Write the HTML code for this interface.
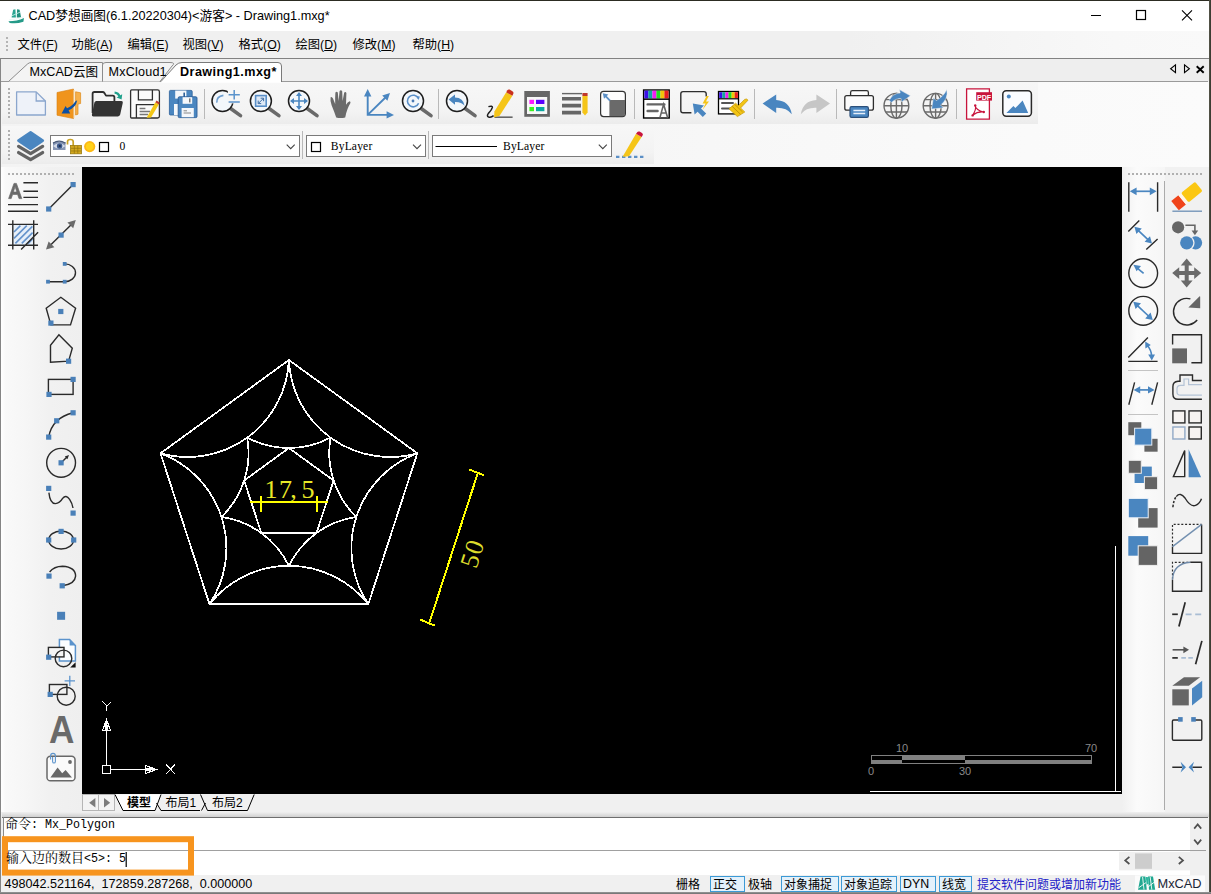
<!DOCTYPE html><html lang="zh-CN"><head><meta charset="utf-8"><title>CAD梦想画图</title><style>
*{margin:0;padding:0;box-sizing:border-box}
html,body{width:1211px;height:894px;overflow:hidden;background:#f0f0f0}
body{position:relative;font-family:"Liberation Sans","Noto Sans CJK SC",sans-serif;font-size:12px;color:#000}
.a{position:absolute}
.t{position:absolute;white-space:nowrap;line-height:1}
.ui{font-family:"Liberation Sans","Noto Sans CJK SC",sans-serif}
.songc{font-family:"Liberation Serif","Noto Serif CJK SC",serif}
.mn{display:inline-block;font-family:"Liberation Mono",monospace;font-weight:400;font-size:13.33px;transform:scaleX(.875);transform-origin:0 50%}
.song{font-family:"Liberation Serif","Noto Serif CJK SC",serif}
svg{position:absolute;left:0;top:0;overflow:visible}
u{text-decoration:underline;text-underline-offset:1px}
</style></head><body>
<div class="a" style="left:0px;top:0px;width:1211px;height:31px;background:#fff"></div>
<div class="t ui" style="left:28.5px;top:10px;font-size:12.7px">CAD梦想画图(6.1.20220304)&lt;游客&gt; - Drawing1.mxg*</div>
<div class="a" style="left:0px;top:31px;width:1211px;height:27px;background:linear-gradient(90deg,#f0f0f0 0,#f0f0f0 70%,#f8f8f8 92%,#f9f9f9 100%)"></div>
<div class="a" style="left:0px;top:58px;width:1211px;height:1px;background:#828282"></div>
<div class="t ui" style="left:17.5px;top:39px;font-size:12.3px">文件(<u>F</u>)</div>
<div class="t ui" style="left:71.5px;top:39px;font-size:12.3px">功能(<u>A</u>)</div>
<div class="t ui" style="left:127.5px;top:39px;font-size:12.3px">编辑(<u>E</u>)</div>
<div class="t ui" style="left:182.5px;top:39px;font-size:12.3px">视图(<u>V</u>)</div>
<div class="t ui" style="left:238.5px;top:39px;font-size:12.3px">格式(<u>O</u>)</div>
<div class="t ui" style="left:295.5px;top:39px;font-size:12.3px">绘图(<u>D</u>)</div>
<div class="t ui" style="left:352.5px;top:39px;font-size:12.3px">修改(<u>M</u>)</div>
<div class="t ui" style="left:412.5px;top:39px;font-size:12.3px">帮助(<u>H</u>)</div>
<div class="a" style="left:0px;top:59px;width:1211px;height:22px;background:#eeeeee"></div>
<div class="a" style="left:0px;top:81px;width:1208px;height:1px;background:#9a9a9a"></div>
<div class="a" style="left:1px;top:82px;width:1208px;height:85px;background:linear-gradient(90deg,#f3f3f3 0,#f6f6f6 50%,#fafafa 85%,#fbfbfb 100%)"></div>
<div class="a" style="left:2px;top:82px;width:1036px;height:42px;background:linear-gradient(180deg,#f7f7f7,#f3f3f3 70%,#ececec)"></div>
<div class="a" style="left:2px;top:126px;width:652px;height:38px;background:linear-gradient(180deg,#f7f7f7,#f3f3f3 70%,#ececec)"></div>
<div class="a" style="left:1px;top:167px;width:81px;height:645px;background:linear-gradient(90deg,#ffffff 0,#f9f9f9 6%,#f6f6f6 30%,#f1f1f1 60%,#efefef 100%)"></div>
<div class="a" style="left:1122px;top:167px;width:43px;height:645px;background:linear-gradient(90deg,#f0f0f0 0,#fbfbfb 35%,#f6f6f6 100%)"></div>
<div class="a" style="left:1165px;top:167px;width:44px;height:645px;background:#f1f1f1"></div>
<div class="a" style="left:82.3px;top:167px;width:1039.4px;height:626.6px;background:#000"></div>
<div class="a" style="left:82px;top:794px;width:1040px;height:17px;background:#f0f0f0"></div>
<div class="a" style="left:2px;top:812px;width:1207px;height:5px;background:linear-gradient(180deg,#f0f0f0,#d0d0d0)"></div>
<div class="a" style="left:2px;top:817px;width:1206px;height:1px;background:#6e6e6e"></div>
<div class="a" style="left:3px;top:818px;width:1204px;height:32px;background:#fff"></div>
<div class="a" style="left:3px;top:817px;width:1px;height:59px;background:#8a8a8a"></div>
<div class="a" style="left:3px;top:850px;width:1203px;height:1px;background:#a0a0a0"></div>
<div class="a" style="left:4px;top:851px;width:1203px;height:24px;background:#fff"></div>
<div class="a" style="left:0px;top:875px;width:1211px;height:19px;background:#f0f0f0"></div>
<div class="a" style="left:0px;top:0px;width:1211px;height:1px;background:#2c2c22"></div>
<div class="a" style="left:1209px;top:0px;width:2px;height:894px;background:linear-gradient(90deg,#5a5a4e,#33332a)"></div>
<div class="a" style="left:0px;top:58px;width:1px;height:836px;background:#858585"></div>
<div class="a" style="left:0px;top:892px;width:1211px;height:2px;background:linear-gradient(180deg,#9a9a9a,#6e6e6e)"></div>
<svg width="1211" height="894" viewBox="0 0 1211 894"><path d="M1091 15.5h10" stroke="#000" stroke-width="1" fill="none"/><rect x="1136.5" y="10.5" width="9" height="9" stroke="#000" stroke-width="1.2" fill="none"/><path d="M1182 10.3l10 10M1192 10.3l-10 10" stroke="#000" stroke-width="1.1" fill="none"/><g><path d="M8.4 21.2 Q17 21.2 24 18 L23.4 21.8 Q16 24.2 9.8 22.9Z" fill="#259a88"/><path d="M11.6 17.4 L13.1 9.7 L15.4 9.3 L15.9 17.4Z" fill="#2aa592"/><path d="M16.8 17.4 L17.1 9.3 L19.6 9.7 L21.1 17.4Z" fill="#1f8f7e"/><path d="M11.4 16 L20.4 12" stroke="#bfeee4" stroke-width=".9"/><path d="M9.4 19.6 Q17 19.6 23.6 16.9" stroke="#e9f8f5" stroke-width=".9" fill="none"/></g><rect x="6" y="37" width="2" height="2" fill="#b4b4b4"/><rect x="6" y="41" width="2" height="2" fill="#b4b4b4"/><rect x="6" y="45" width="2" height="2" fill="#b4b4b4"/><rect x="6" y="49" width="2" height="2" fill="#b4b4b4"/><path d="M8.5 81.5 L27.5 64 Q29 62.5 31.5 62.5 H102.5 V81.5" fill="#f4f4f4" stroke="#8c8c8c" stroke-width="1"/><path d="M102.5 81.5 V65 Q102.5 62.5 106 62.5 H170 Q176 62.5 172 66 L160 81.5" fill="#f4f4f4" stroke="#8c8c8c" stroke-width="1"/><path d="M160.5 82 L176 65 Q178.5 62.5 182 62.5 H278 Q281.5 62.5 281.5 66 V82" fill="#ffffff" stroke="#7a7a7a" stroke-width="1"/><path d="M161.5 82 H281" stroke="#fff" stroke-width="1.6"/><path d="M1175.5 64.8 V72.6 L1170.6 68.7Z" fill="none" stroke="#000" stroke-width="1.1"/><path d="M1184.5 64.8 V72.6 L1189.4 68.7Z" fill="none" stroke="#000" stroke-width="1.1"/><path d="M1196.7 66.3 L1203.7 72.8 M1203.7 66.3 L1196.7 72.8" stroke="#000" stroke-width="1.9" fill="none"/><rect x="8" y="88" width="2" height="2" fill="#b0b0b0"/><rect x="8" y="130" width="2" height="2" fill="#b0b0b0"/><rect x="8" y="92" width="2" height="2" fill="#b0b0b0"/><rect x="8" y="134" width="2" height="2" fill="#b0b0b0"/><rect x="8" y="96" width="2" height="2" fill="#b0b0b0"/><rect x="8" y="138" width="2" height="2" fill="#b0b0b0"/><rect x="8" y="100" width="2" height="2" fill="#b0b0b0"/><rect x="8" y="142" width="2" height="2" fill="#b0b0b0"/><rect x="8" y="104" width="2" height="2" fill="#b0b0b0"/><rect x="8" y="146" width="2" height="2" fill="#b0b0b0"/><rect x="8" y="108" width="2" height="2" fill="#b0b0b0"/><rect x="8" y="150" width="2" height="2" fill="#b0b0b0"/><rect x="8" y="112" width="2" height="2" fill="#b0b0b0"/><rect x="8" y="154" width="2" height="2" fill="#b0b0b0"/><rect x="8" y="116" width="2" height="2" fill="#b0b0b0"/><rect x="8" y="158" width="2" height="2" fill="#b0b0b0"/><rect x="8" y="173" width="2" height="2" fill="#b0b0b0"/><rect x="12" y="173" width="2" height="2" fill="#b0b0b0"/><rect x="16" y="173" width="2" height="2" fill="#b0b0b0"/><rect x="20" y="173" width="2" height="2" fill="#b0b0b0"/><rect x="24" y="173" width="2" height="2" fill="#b0b0b0"/><rect x="28" y="173" width="2" height="2" fill="#b0b0b0"/><rect x="32" y="173" width="2" height="2" fill="#b0b0b0"/><rect x="36" y="173" width="2" height="2" fill="#b0b0b0"/><rect x="40" y="173" width="2" height="2" fill="#b0b0b0"/><rect x="44" y="173" width="2" height="2" fill="#b0b0b0"/><rect x="48" y="173" width="2" height="2" fill="#b0b0b0"/><rect x="52" y="173" width="2" height="2" fill="#b0b0b0"/><rect x="56" y="173" width="2" height="2" fill="#b0b0b0"/><rect x="60" y="173" width="2" height="2" fill="#b0b0b0"/><rect x="64" y="173" width="2" height="2" fill="#b0b0b0"/><rect x="68" y="173" width="2" height="2" fill="#b0b0b0"/><rect x="72" y="173" width="2" height="2" fill="#b0b0b0"/><rect x="1128" y="173" width="2" height="2" fill="#b0b0b0"/><rect x="1132" y="173" width="2" height="2" fill="#b0b0b0"/><rect x="1136" y="173" width="2" height="2" fill="#b0b0b0"/><rect x="1140" y="173" width="2" height="2" fill="#b0b0b0"/><rect x="1144" y="173" width="2" height="2" fill="#b0b0b0"/><rect x="1148" y="173" width="2" height="2" fill="#b0b0b0"/><rect x="1152" y="173" width="2" height="2" fill="#b0b0b0"/><rect x="1156" y="173" width="2" height="2" fill="#b0b0b0"/><rect x="1160" y="173" width="2" height="2" fill="#b0b0b0"/><rect x="1164" y="173" width="2" height="2" fill="#b0b0b0"/><rect x="1168" y="173" width="2" height="2" fill="#b0b0b0"/><rect x="1172" y="173" width="2" height="2" fill="#b0b0b0"/><rect x="1176" y="173" width="2" height="2" fill="#b0b0b0"/><rect x="1180" y="173" width="2" height="2" fill="#b0b0b0"/><rect x="1184" y="173" width="2" height="2" fill="#b0b0b0"/><rect x="1188" y="173" width="2" height="2" fill="#b0b0b0"/><rect x="1192" y="173" width="2" height="2" fill="#b0b0b0"/><rect x="1196" y="173" width="2" height="2" fill="#b0b0b0"/><rect x="1200" y="173" width="2" height="2" fill="#b0b0b0"/><path d="M204.5 89 V119" stroke="#b9b9b9" stroke-width="1"/><path d="M438.5 89 V119" stroke="#b9b9b9" stroke-width="1"/><path d="M634.5 89 V119" stroke="#b9b9b9" stroke-width="1"/><path d="M754.5 89 V119" stroke="#b9b9b9" stroke-width="1"/><path d="M836.5 89 V119" stroke="#b9b9b9" stroke-width="1"/><path d="M956.5 89 V119" stroke="#b9b9b9" stroke-width="1"/><path d="M302.5 131 V159" stroke="#b9b9b9" stroke-width="1"/><path d="M428.5 131 V159" stroke="#b9b9b9" stroke-width="1"/><path d="M1164.5 181 V810" stroke="#ababab" stroke-width="1"/><path d="M1128 370.5 H1158 M1128 414.5 H1158" stroke="#c4c4c4" stroke-width="1"/><rect x="50.5" y="135.5" width="249" height="21" fill="#fff" stroke="#7a7a7a" stroke-width="1"/><rect x="306.5" y="135.5" width="119" height="21" fill="#fff" stroke="#7a7a7a" stroke-width="1"/><rect x="432.5" y="135.5" width="179" height="21" fill="#fff" stroke="#7a7a7a" stroke-width="1"/><path d="M286.7 144.6 L290.7 148.6 L294.7 144.6" fill="none" stroke="#444" stroke-width="1.1"/><path d="M413 144.6 L417 148.6 L421 144.6" fill="none" stroke="#444" stroke-width="1.1"/><path d="M598.8 144.6 L602.8 148.6 L606.8 144.6" fill="none" stroke="#444" stroke-width="1.1"/><rect x="99.5" y="142.5" width="9" height="9" fill="#fff" stroke="#000" stroke-width="1.2"/><rect x="311.5" y="142.5" width="9" height="9" fill="#fff" stroke="#000" stroke-width="1.2"/><path d="M435.5 146.5 H497" stroke="#000" stroke-width="1"/><g><rect x="53" y="142" width="12.5" height="8" fill="#8796b4"/><path d="M53 146 Q59 140.5 65.5 146 Q59 151 53 146Z" fill="#d5dbe8"/><circle cx="59.6" cy="146" r="2.7" fill="#3d5a8c"/><circle cx="59.8" cy="146" r="1.1" fill="#1c2c4a"/><path d="M53 143.2 Q59 139 65.5 143.2" stroke="#4a5a78" stroke-width="1.2" fill="none"/></g><g><path d="M67.5 144.5 V141.8 Q67.5 139.5 70.3 139.5 Q73.2 139.5 73.2 141.8 V146" fill="none" stroke="#c9a227" stroke-width="1.7"/><rect x="70.5" y="145.5" width="11" height="8.3" fill="#d4a81e" stroke="#9a7a10" stroke-width=".8"/><path d="M71 148.3H81M71 151H81M74.3 145.8V153.5M77.8 145.8V153.5" stroke="#8a6c0c" stroke-width=".6"/></g><g><circle cx="89.7" cy="146.6" r="5.6" fill="#fdb813"/><circle cx="89.7" cy="146.6" r="3.8" fill="#ffd21a"/></g><rect x="82.5" y="794.5" width="16" height="16" fill="#f3f3f3" stroke="#b5b5b5" stroke-width="1"/><rect x="98.5" y="794.5" width="16" height="16" fill="#f3f3f3" stroke="#b5b5b5" stroke-width="1"/><path d="M95.4 798 V807.6 L89.2 802.8Z" fill="#7b7b7b"/><path d="M104 798 V807.6 L110.2 802.8Z" fill="#7b7b7b"/><path d="M115 794.5 L123 810.5 H155 L161 794.5Z" fill="#fff"/><path d="M115 794.5 L123 810.5 H155 L161 794.5" fill="none" stroke="#000" stroke-width="1"/><path d="M156.5 803 L161 810.5 H200" fill="none" stroke="#000" stroke-width="1"/><path d="M200.5 794.5 L207.5 810.5 H247.5 L254.2 794.5" fill="none" stroke="#000" stroke-width="1"/><path d="M205.5 803 L201.5 810.5" fill="none" stroke="#000" stroke-width="1"/><rect x="1190" y="818" width="17" height="32" fill="#f0f0f0"/><path d="M1194.2 828.6 L1197.7 824.4 L1201.2 828.6" fill="none" stroke="#505050" stroke-width="1.7"/><path d="M1194.2 839.6 L1197.7 843.8 L1201.2 839.6" fill="none" stroke="#505050" stroke-width="1.7"/><rect x="1119" y="852" width="71" height="18.4" fill="#f0f0f0"/><rect x="1190" y="851" width="17" height="24" fill="#f0f0f0"/><rect x="1135" y="853.4" width="17" height="15.4" fill="#cdcdcd"/><path d="M1129.4 856.8 L1125.2 860.4 L1129.4 864" fill="none" stroke="#505050" stroke-width="1.7"/><path d="M1178.8 856.8 L1183 860.4 L1178.8 864" fill="none" stroke="#505050" stroke-width="1.7"/><rect x="1135" y="875.5" width="70" height="16.5" fill="#fbfbfb"/><rect x="5" y="839.2" width="186" height="33.4" fill="none" stroke="#f7941e" stroke-width="6"/><rect x="125.6" y="852" width="1.2" height="15" fill="#000"/><rect x="710.5" y="876.5" width="34" height="15" fill="#e3f1fb" stroke="#3c9ad6" stroke-width="1"/><rect x="781.5" y="876.5" width="57" height="15" fill="#e3f1fb" stroke="#3c9ad6" stroke-width="1"/><rect x="841.5" y="876.5" width="55" height="15" fill="#e3f1fb" stroke="#3c9ad6" stroke-width="1"/><rect x="900.5" y="876.5" width="35" height="15" fill="#e3f1fb" stroke="#3c9ad6" stroke-width="1"/><rect x="939.5" y="876.5" width="32" height="15" fill="#e3f1fb" stroke="#3c9ad6" stroke-width="1"/><g fill="#1fa890"><path d="M1140.6 876.4 L1145.4 876.4 L1146.8 889.8 L1138 889.8Z"/><path d="M1148 876.4 L1153 876.4 L1155.2 889.8 L1149 889.8Z"/><path d="M1145.8 877 L1147.8 877 L1148.6 884 L1146.6 884.6Z" fill="#2bb8a0"/></g><path d="M1138.4 888 L1146 882.6 M1147.4 887.4 L1154 882.4 M1142.6 877 L1144 889.6 M1150.2 877 L1151.8 889.6" stroke="#fbfbfb" stroke-width=".9" fill="none"/></svg>
<div class="t ui" style="left:29.5px;top:66px;font-size:12.6px">MxCAD云图</div>
<div class="t ui" style="left:108.5px;top:66px;font-size:12.6px;letter-spacing:.2px">MxCloud1</div>
<div class="t ui" style="left:180px;top:66px;font-size:12.6px;font-weight:bold;letter-spacing:.45px">Drawing1.mxg*</div>
<div class="t song" style="left:119.5px;top:141.3px;font-size:11.6px">0</div>
<div class="t song" style="left:330.8px;top:141px;font-size:11.6px;letter-spacing:.15px">ByLayer</div>
<div class="t song" style="left:503px;top:141px;font-size:11.6px;letter-spacing:.15px">ByLayer</div>
<div class="t ui" style="left:127px;top:797px;font-size:12px;font-weight:bold">模型</div>
<div class="t ui" style="left:165.5px;top:797px;font-size:12px">布局1</div>
<div class="t ui" style="left:212px;top:797px;font-size:12px">布局2</div>
<div class="t songc" style="left:5px;top:817px;font-size:13px;font-weight:400">命令<span class="mn">: Mx_Polygon</span></div>
<div class="t songc" style="left:6px;top:851px;font-size:13px;font-weight:400">输入边的数目<span class="mn">&lt;5&gt;: 5</span></div>
<div class="t ui" style="left:4.5px;top:877.5px;font-size:12.6px">498042.521164,&nbsp; 172859.287268,&nbsp; 0.000000</div>
<div class="t ui" style="left:676px;top:879px;font-size:12px">栅格</div>
<div class="t ui" style="left:713px;top:879px;font-size:12px">正交</div>
<div class="t ui" style="left:748px;top:879px;font-size:12px">极轴</div>
<div class="t ui" style="left:784px;top:879px;font-size:12px">对象捕捉</div>
<div class="t ui" style="left:844px;top:879px;font-size:12px">对象追踪</div>
<div class="t ui" style="left:903px;top:878px;font-size:12.4px">DYN</div>
<div class="t ui" style="left:942px;top:879px;font-size:12px">线宽</div>
<div class="t ui" style="left:977px;top:879px;font-size:12px;color:#2222c8">提交软件问题或增加新功能</div>
<div class="t ui" style="left:1157.5px;top:878px;font-size:12.8px;color:#1a2636">MxCAD</div>
<svg width="1211" height="894" viewBox="0 0 1211 894"><path d="M16.6 91.9 H36.2 L45.4 101 V115 H16.6Z" fill="#eef2f9" stroke="#8ba6cd" stroke-width="1.3" stroke-linejoin="round"/><path d="M36.2 91.9 V101 H45.4" fill="none" stroke="#8ba6cd" stroke-width="1.3"/><path d="M57 92.5 L73.5 89 V118.6 L57 115.2Z" fill="#f0941c"/><path d="M57 92.5 L73.5 89 V118.6 L57 115.2Z" fill="none" stroke="#d87f10" stroke-width=".6"/><path d="M75.6 91.8 L80.6 92.8 V103.5 L78 104 V114.2 L75.6 115Z" fill="#f6b04a" stroke="#e08a18" stroke-width=".7"/><path d="M74.2 90 V118" stroke="#fbe3bd" stroke-width="1.2"/><path d="M77.2 100.3 Q76 107.5 68.6 110.2 L70.2 113.4 L61.6 113.6 L65.6 106 L67 108.3 Q73.4 105.2 75.2 101.5Z" fill="#0b4fa3"/><path d="M92.6 113 V93.8 Q92.6 92 94.4 92 H102.6 Q103.8 92 104.4 93 L106 95.6 H112.8 Q114.4 95.6 114.4 97.2 V101" fill="none" stroke="#2e2e2e" stroke-width="1.8" stroke-linejoin="round"/><path d="M96.4 101 H121.4 Q123.2 101 122.8 102.8 L120.2 114.6 Q119.8 116.4 118 116.4 H93.4 Q91.4 116.4 91.9 114.4 L94.4 102.6 Q94.8 101 96.4 101Z" fill="#333333"/><path d="M114.6 92.6 Q118.4 92.8 119.6 96.6" fill="none" stroke="#1fa18c" stroke-width="2.2"/><path d="M116.6 97.4 L121.6 99.6 L122.2 94.2Z" fill="#1fa18c"/><path d="M131.6 89.9 H157.6 Q159.4 89.9 159.4 91.7 V116.2 Q159.4 118 157.6 118 H131.6 Q130.6 118 130.6 117 V90.9 Q130.6 89.9 131.6 89.9Z" fill="#fafafa" stroke="#2e2e2e" stroke-width="1.3"/><path d="M138.4 90 V99.8 H152.4 V90" fill="none" stroke="#2e2e2e" stroke-width="1.3"/><path d="M136.4 118 V104.6 H155" fill="none" stroke="#2e2e2e" stroke-width="1.3"/><path d="M139.6 108.6 H145.4 M139.6 111.6 H150 M139.6 114.4 H148" stroke="#777" stroke-width="1.5"/><path d="M155.4 102.2 L158.8 104.6 L151 117.4 L146.6 117.8Z" fill="#f3c716"/><path d="M155.4 102.2 L158.8 104.6 L159.8 102.8 L156.6 100.6Z" fill="#c0392b"/><path d="M170.4 90.4 H191 Q192.2 90.4 192.2 91.6 V115 H170.4 Q169.4 115 169.4 114 V91.4 Q169.4 90.4 170.4 90.4Z" fill="#4a86c0" stroke="#2c5f98" stroke-width=".8"/><rect x="175.2" y="90.6" width="11.2" height="8" fill="#f4f7fb"/><rect x="183.4" y="92.6" width="1.6" height="4.4" fill="#2c5f98"/><rect x="174" y="104" width="6" height="11" fill="#f4f7fb"/><path d="M179.4 96.8 H195.8 Q197 96.8 197 98 V116.4 Q197 117.6 195.8 117.6 H179.4 Q178.2 117.6 178.2 116.4 V98 Q178.2 96.8 179.4 96.8Z" fill="#4a86c0" stroke="#2c5f98" stroke-width=".9"/><rect x="182.6" y="97.2" width="9.6" height="6.6" fill="#f4f7fb"/><rect x="189" y="98.4" width="1.5" height="4" fill="#777"/><rect x="181.6" y="108" width="12.2" height="9.2" fill="#f4f7fb"/><path d="M183.6 110.8 H187 M183.6 113 H191" stroke="#888" stroke-width="1"/><path d="M230.3 108.2 L240.5 115.6" stroke="#6a6a6a" stroke-width="3.6" stroke-linecap="round"/><circle cx="222.5" cy="101" r="10.5" fill="#f3f7fb" stroke="#1e1e1e" stroke-width="1.5"/><path d="M216.8 102.6 Q216.4 96.4 223.4 95.4" fill="none" stroke="#6f9fd0" stroke-width="1.6"/><rect x="227.8" y="89.4" width="12.6" height="14" fill="#f6f6f6"/><path d="M228.6 94.8 H239.8 M234.2 90 V99.4 M228.6 102 H239.8" stroke="#5b93cc" stroke-width="1.5" fill="none"/><path d="M268.7 108.2 L278.9 115.6" stroke="#6a6a6a" stroke-width="3.6" stroke-linecap="round"/><circle cx="260.9" cy="101" r="10.5" fill="#f3f7fb" stroke="#1e1e1e" stroke-width="1.5"/><rect x="255.6" y="95.6" width="10.6" height="10.6" fill="#dfeaf6" stroke="#5a8fc8" stroke-width="1.6"/><path d="M258.4 103.4 L263.4 98.4 M260.6 98.2 H263.6 V101.2 M258.2 100.6 V103.6 H261.2" stroke="#3f6ea5" stroke-width="1" fill="none"/><path d="M306.8 108.2 L317 115.6" stroke="#6a6a6a" stroke-width="3.6" stroke-linecap="round"/><circle cx="299" cy="101" r="10.5" fill="#f3f7fb" stroke="#1e1e1e" stroke-width="1.5"/><path d="M291.6 101 H306.4 M299 93.6 V108.4" stroke="#4a86c0" stroke-width="1.6"/><path d="M299 92 L296 96 H302Z M299 110 L296 106 H302Z M290 101 L294 98 V104Z M308 101 L304 98 V104Z" fill="#4a86c0"/><path d="M336.2 117.4 Q334.4 112 331.6 105.2 Q330 100.6 330.6 97.2 Q332 96.4 333 98.6 L335.2 104 Q335 97 335.4 92.4 Q336.8 90.8 337.8 92.6 L338.6 101 L339.6 91 Q341 89.2 342.2 91.2 L342.6 101 L344.2 92.6 Q345.6 91.2 346.4 93 L346 104.8 Q347.6 102 349.6 101.2 Q351.2 101.4 350.2 103.6 Q347 108.6 345.2 117.4 Q340.6 118.8 336.2 117.4Z" fill="#6b6b6b"/><path d="M367.7 95 V114.9 H388 M367.7 114.9 L386 97" stroke="#4a86c0" stroke-width="1.9" fill="none"/><path d="M367.7 89 L364 96.4 H371.4Z M394 114.9 L386.6 111.2 V118.6Z M390 93 L382.2 95.6 L387.4 100.8Z" fill="#4a86c0"/><path d="M420.8 108.2 L431 115.6" stroke="#6a6a6a" stroke-width="3.6" stroke-linecap="round"/><circle cx="413" cy="101" r="10.5" fill="#f3f7fb" stroke="#1e1e1e" stroke-width="1.5"/><path d="M418.4 98.4 A5.8 5.8 0 1 0 418.6 103.2" fill="none" stroke="#5a8fc8" stroke-width="1.6"/><circle cx="413" cy="101" r="1.4" fill="#4a7ab4"/><path d="M416.2 96 L419.8 96.6 L418.6 100Z" fill="#5a8fc8"/><path d="M464.8 108.2 L475 115.6" stroke="#6a6a6a" stroke-width="3.6" stroke-linecap="round"/><circle cx="457" cy="101" r="10.5" fill="#f3f7fb" stroke="#1e1e1e" stroke-width="1.5"/><path d="M448.6 99.6 L455 94.6 V97.4 Q463.4 97.6 464.6 105.8 Q461.6 101.8 455 102 V104.8Z" fill="#4a86c0"/><path d="M488.4 106.6 Q492.6 105.4 492.4 107.4 Q491.8 110 488.4 113.4 Q486.4 116.2 488.6 117 Q491.2 117.8 493.6 115.6" fill="none" stroke="#1e1e1e" stroke-width="1.5"/><path d="M494.4 117.2 H512.6" stroke="#666" stroke-width="1.6"/><path d="M506.2 92.2 L512.4 95.8 L499.6 115.8 L494 117.6 L494.4 111.6Z" fill="#f5c518"/><path d="M506.2 92.2 L512.4 95.8 L513.4 93.6 Q513.8 92.2 512.4 91.2 L509.6 89.6 Q508.2 89 507.4 90.2Z" fill="#c8301e"/><rect x="524.3" y="91" width="25.6" height="25.8" fill="#666"/><rect x="527" y="97" width="20.2" height="17" fill="#f7f7f7"/><rect x="529.4" y="99.8" width="4.6" height="4.2" fill="#ff19ff"/><rect x="536" y="99.8" width="8.4" height="4.2" fill="#5a00ff"/><rect x="529.4" y="107" width="4.6" height="4.2" fill="#3df21e"/><rect x="536" y="107" width="8.4" height="4.2" fill="#0aa8a0"/><path d="M562 93.6 H582" stroke="#666" stroke-width="1.4"/><path d="M562 98.8 H581 M562 105.6 H581 M562 112.6 H581" stroke="#666" stroke-width="3.6"/><path d="M582.4 96 H587.6 V112.4 L585 115.4 L582.4 112.4Z" fill="#f5c518"/><rect x="582.4" y="93" width="5.2" height="3" fill="#c0392b"/><rect x="600.6" y="91.4" width="24.8" height="25.2" rx="3" fill="#fdfdfd" stroke="#333" stroke-width="1.2"/><path d="M609.4 100 H625 V114 Q625 116.2 622.8 116.2 H609.4Z" fill="#6a6a6a"/><path d="M610 100.6 L604.6 95.2" stroke="#5b8fc6" stroke-width="1.8"/><path d="M602.8 93.2 L608.4 94.4 L604 98.8Z" fill="#5b8fc6"/><rect x="643.6" y="90" width="25.6" height="28" fill="#fff" stroke="#000" stroke-width="1.4"/><rect x="644.4" y="90.6" width="4.1" height="8" fill="#3a10e8"/><rect x="648.4" y="90.6" width="4.1" height="8" fill="#12a7a0"/><rect x="652.4" y="90.6" width="4.1" height="8" fill="#f21cf2"/><rect x="656.4" y="90.6" width="4.1" height="8" fill="#22dd22"/><rect x="660.4" y="90.6" width="4.1" height="8" fill="#f2c40a"/><rect x="664.4" y="90.6" width="4.1" height="8" fill="#e81e1e"/><path d="M643.6 99.2 H669.2" stroke="#000" stroke-width="1.4"/><path d="M647.6 104.4 H664.4 M647.6 111 H657.6" stroke="#666" stroke-width="2.4" stroke-linecap="round"/><path d="M660 117.4 L663.6 104.4 L667.6 117.4 M661.2 113 H666.2" stroke="#666" stroke-width="1.6" fill="none"/><path d="M691.4 112.8 H683 Q680.8 112.8 680.8 110.6 V93.8 Q680.8 91.6 683 91.6 H704 Q706.2 91.6 706.2 93.8 V96.4" fill="none" stroke="#2e2e2e" stroke-width="1.4"/><path d="M706.6 96 L702.6 103.4 H705.6 L702.4 110 L709 101.4 H706 L708.8 96Z" fill="#f5c518"/><path d="M692.8 103.6 L704 105.4 L701 108.4 L706.2 113.6 L702.8 117 L697.6 111.8 L694.6 114.6Z" fill="#4a86c0"/><rect x="718.5" y="91.5" width="20" height="22.4" fill="#fff" stroke="#000" stroke-width="1.3"/><rect x="719.2" y="92.2" width="3.2" height="6" fill="#3a10e8"/><rect x="722.3" y="92.2" width="3.2" height="6" fill="#12a7a0"/><rect x="725.4" y="92.2" width="3.2" height="6" fill="#f21cf2"/><rect x="728.5" y="92.2" width="3.2" height="6" fill="#22dd22"/><rect x="731.6" y="92.2" width="3.2" height="6" fill="#f2c40a"/><rect x="734.7" y="92.2" width="3.2" height="6" fill="#e81e1e"/><path d="M718.5 98.8 H738.5" stroke="#000" stroke-width="1.2"/><path d="M722 103 H733 M722 108.4 H730" stroke="#555" stroke-width="2" stroke-linecap="round"/><path d="M744.6 99.4 Q746.8 98.2 748 100.2 L740.6 108 L744.8 112 L737.4 116.6 L729 108.8 L735.6 103.2 L738.4 105.6Z" fill="#f2c414" stroke="#c79a08" stroke-width=".7"/><path d="M732 106.2 L740.6 114.4 M734.6 104.2 L742.6 112" stroke="#b88a06" stroke-width=".8"/><path d="M762.6 103.4 L776.2 94.6 V100 Q789.6 100.8 791.8 114.2 Q786.4 107.4 776.2 107.8 V113Z" fill="#4a86c0"/><path d="M830 103.4 L816.4 94.6 V100 Q803 100.8 800.8 114.2 Q806.2 107.4 816.4 107.8 V113Z" fill="#c6c6c6"/><path d="M850.6 95.6 V92.4 Q850.6 90.6 852.4 90.6 H866.6 Q868.4 90.6 868.4 92.4 V95.6" fill="#fdfdfd" stroke="#2e2e2e" stroke-width="1.3"/><rect x="844.8" y="95.6" width="28.6" height="14.6" rx="2" fill="#fbfbfb" stroke="#2e2e2e" stroke-width="1.3"/><rect x="850" y="106.6" width="18.4" height="10.8" rx="1.6" fill="#4a86c0" stroke="#2b4f7a" stroke-width="1.2"/><path d="M853.4 110.6 H865.2 M853.4 113.6 H865.2" stroke="#e8f0fa" stroke-width="1.5"/><g fill="none" stroke="#6b6b6b" stroke-width="1.4"><circle cx="896.4" cy="105.8" r="12.4"/><ellipse cx="896.4" cy="105.8" rx="5.6" ry="12.4"/><path d="M896.4 93.39999999999999 V118.2 M884.0 105.8 H908.8 M885.8 99.6 H907.0 M885.8 112.0 H907.0"/></g><path d="M889 100.6 Q892.6 93.4 900.2 93 L899.4 89.6 L910.4 95.8 L901.6 102 L901 98.4 Q895 98.4 891.6 102.4Z" fill="#4a86c0" stroke="#f3f3f3" stroke-width=".5"/><g fill="none" stroke="#6b6b6b" stroke-width="1.4"><circle cx="935.6" cy="105.8" r="12.4"/><ellipse cx="935.6" cy="105.8" rx="5.6" ry="12.4"/><path d="M935.6 93.39999999999999 V118.2 M923.2 105.8 H948.0 M925.0 99.6 H946.2 M925.0 112.0 H946.2"/></g><path d="M946.8 89.6 Q948.6 99 940.6 105 L943.4 107.8 L931.6 109 L933.4 97.8 L936.2 100.6 Q943.6 96.6 946.8 89.6Z" fill="#4a86c0" stroke="#f3f3f3" stroke-width=".5"/><path d="M966.6 88.8 H989.4 V119.2 H966.6Z" fill="#fff" stroke="#c8143c" stroke-width="1.3"/><rect x="976.2" y="92.2" width="15.8" height="8.4" fill="#c8143c"/><path d="M975.2 105.6 Q976.6 109.4 972.6 115.2 M972.6 115.2 Q977.6 111.4 983.6 112 M975.2 105.6 Q976 110.2 983.6 112" fill="none" stroke="#c8143c" stroke-width="1.1"/><circle cx="975.2" cy="105.4" r="1.2" fill="#c8143c"/><circle cx="972.6" cy="115.4" r="1.2" fill="#c8143c"/><circle cx="983.8" cy="112" r="1.2" fill="#c8143c"/><rect x="1002.8" y="90.8" width="28.6" height="25.4" rx="3.4" fill="#fafcff" stroke="#2a2a2a" stroke-width="1.5"/><circle cx="1008.8" cy="96.6" r="2" fill="#4a86c0"/><path d="M1006.4 113 L1013.4 106 L1015.4 108 L1022.6 100.6 L1028.2 113Z" fill="#4a86c0"/><path d="M18.6 152.6 L30.6 159.6 L42.6 152.6" fill="none" stroke="#636363" stroke-width="3.3" stroke-linejoin="round" stroke-linecap="round"/><path d="M18.6 146.4 L30.6 153.6 L42.6 146.4" fill="none" stroke="#636363" stroke-width="3.3" stroke-linejoin="round" stroke-linecap="round"/><path d="M30.6 132.4 L42.8 140.6 L30.6 148.8 L18.4 140.6Z" fill="#4a86c0" stroke="#4a86c0" stroke-width="2.6" stroke-linejoin="round"/><path d="M616 156.8 H646" stroke="#5b8fc6" stroke-width="2.2" stroke-dasharray="3.4 2.6"/><path d="M636 133.8 L641.6 137 L629 156.2 L622.6 156.8Z" fill="#f5c518"/><path d="M636 133.8 L641.6 137 L642.8 135 Q643.2 133.8 642 133 L639.6 131.6 Q638.2 131 637.4 132Z" fill="#c8143c"/><path d="M23.4 182.8 H38 M23.4 191.2 H38 M23.4 197.4 H38 M8 204.6 H38 M8 211.2 H38" stroke="#2a2a2a" stroke-width="1.4" fill="none"/><path d="M8.6 198.6 L14 183.4 H16.4 L21.8 198.6 H19 L17.6 194.4 H12.6 L11.2 198.6Z M13.4 192 H16.8 L15.1 186.6Z" fill="#6a6a6a" fill-rule="evenodd" stroke="#6a6a6a" stroke-width=".7"/><path d="M48.7 209 L73.1 184.6" stroke="#2a2a2a" stroke-width="1.4" fill="none"/><rect x="46.1" y="206.4" width="5.2" height="5.2" fill="#4a80b8"/><rect x="70.5" y="182.0" width="5.2" height="5.2" fill="#4a80b8"/><rect x="13" y="224.6" width="20.6" height="20.6" fill="#e8f0f9"/><g stroke="#6593cb" stroke-width="1.6"><path d="M14 232 L20.4 225.6 M14 238.4 L26.8 225.6 M15.4 243.4 L32.4 226.4 M21.8 243.4 L32.6 232.6 M28 243.6 L32.6 239"/></g><path d="M8 224.4 H38 M8 245.3 H38 M12.8 220.2 V249.4 M33.7 220.2 V249.4 M21.1 249.4 L38.1 232.2" stroke="#2a2a2a" stroke-width="1.4" fill="none"/><path d="M50.6 245 L71.4 224.4" stroke="#2a2a2a" stroke-width="1.4"/><path d="M46 249.6 L48.6 241.4 L54.4 247.2Z M75.8 220 L73.2 228.2 L67.4 222.4Z" fill="#6a6a6a"/><rect x="58.5" y="232.5" width="5.2" height="5.2" fill="#4a80b8"/><path d="M48 281.7 H64.7 A10.8 8.9 0 0 0 64.7 263.9" stroke="#2a2a2a" stroke-width="1.4" fill="none"/><rect x="46.1" y="279.8" width="3.8" height="3.8" fill="#4a80b8"/><rect x="62.8" y="279.8" width="3.8" height="3.8" fill="#4a80b8"/><rect x="62.8" y="262.0" width="3.8" height="3.8" fill="#4a80b8"/><path d="M60.8 297.3 L75.6 308.2 L70.5 324.9 H50.9 L46.2 308.2Z" stroke="#2a2a2a" stroke-width="1.4" fill="none"/><rect x="58.2" y="308.9" width="5.2" height="5.2" fill="#4a80b8"/><rect x="48.3" y="320.5" width="5.2" height="5.2" fill="#4a80b8"/><path d="M58.9 334.8 L72.3 348.2 L68.6 361.2 L50.5 362.3 V345.2Z" stroke="#2a2a2a" stroke-width="1.4" fill="none"/><rect x="66.0" y="358.6" width="5.2" height="5.2" fill="#4a80b8"/><rect x="48.4" y="379.4" width="24.7" height="15" stroke="#2a2a2a" stroke-width="1.4" fill="none"/><rect x="70.5" y="376.8" width="5.2" height="5.2" fill="#4a80b8"/><rect x="46.4" y="391.8" width="5.2" height="5.2" fill="#4a80b8"/><path d="M48.7 437.1 Q52 418 73.1 412.8" stroke="#2a2a2a" stroke-width="1.4" fill="none"/><rect x="70.5" y="410.2" width="5.2" height="5.2" fill="#4a80b8"/><rect x="54.1" y="418.2" width="5.2" height="5.2" fill="#4a80b8"/><rect x="46.1" y="434.5" width="5.2" height="5.2" fill="#4a80b8"/><circle cx="61.1" cy="462.8" r="14.4" stroke="#2a2a2a" stroke-width="1.4" fill="none"/><path d="M61.1 462.8 L67 457" stroke="#2a2a2a" stroke-width="1.4"/><path d="M69 455 L64.8 456.6 L67.4 459.2Z" fill="#2a2a2a"/><rect x="58.5" y="460.2" width="5.2" height="5.2" fill="#4a80b8"/><path d="M48.9 492.6 Q50 503.6 55.4 503.6 Q59.6 503.4 62.6 498.4 Q66 494 69.6 499.4 Q72.4 503.6 73 508" stroke="#2a2a2a" stroke-width="1.4" fill="none"/><rect x="46.1" y="485.8" width="5.2" height="5.2" fill="#4a80b8"/><rect x="70.5" y="510.5" width="5.2" height="5.2" fill="#4a80b8"/><ellipse cx="61.1" cy="540" rx="12.4" ry="9" stroke="#2a2a2a" stroke-width="1.4" fill="none"/><rect x="58.5" y="528.8" width="5.2" height="5.2" fill="#4a80b8"/><rect x="46.1" y="537.4" width="5.2" height="5.2" fill="#4a80b8"/><rect x="71.1" y="537.4" width="5.2" height="5.2" fill="#4a80b8"/><path d="M49.6 572 Q54 566.2 62.5 566.2 Q75.6 567 75.6 576.1 Q75 584 62.5 585.8" stroke="#2a2a2a" stroke-width="1.4" fill="none"/><rect x="46.4" y="573.5" width="5.2" height="5.2" fill="#4a80b8"/><rect x="59.6" y="583.2" width="5.2" height="5.2" fill="#4a80b8"/><rect x="57.1" y="611.8" width="8" height="8" fill="#4a80b8"/><path d="M59.4 639.4 H69.6 L75.4 645.6 V661 H59.4Z" fill="#fbfdff" stroke="#5b93cc" stroke-width="1.5"/><path d="M69.6 639.4 V645.6 H75.4Z" fill="#5b93cc"/><rect x="48.4" y="647.4" width="15.6" height="9.5" fill="#f4f4f4" stroke="#2a2a2a" stroke-width="1.4" /><circle cx="63.5" cy="658.4" r="8.3" stroke="#2a2a2a" stroke-width="1.4" fill="none"/><rect x="46.1" y="654.6" width="5.2" height="5.2" fill="#4a80b8"/><path d="M75.6 662.3 V667.5 H70.2Z" fill="#111"/><rect x="49.4" y="684.5" width="17.5" height="9.9" stroke="#2a2a2a" stroke-width="1.4" fill="none"/><circle cx="66.2" cy="696.2" r="9" stroke="#2a2a2a" stroke-width="1.4" fill="none"/><rect x="47.6" y="691.8" width="5.2" height="5.2" fill="#4a80b8"/><path d="M64.6 680.9 H75 M69.8 675.8 V686" stroke="#5b93cc" stroke-width="1.3"/><rect x="47" y="756.2" width="28" height="24.6" rx="3.4" fill="#fafafa" stroke="#686868" stroke-width="1.5"/><circle cx="70" cy="762" r="1.9" fill="#686868"/><path d="M50.4 777.6 L57.6 767.6 L62.2 773.2 L65.6 770 L72 777.6Z" fill="#686868"/><path d="M50.6 759.4 V756 Q50.6 753.4 53 753.4 Q55.4 753.4 55.4 756 V761.6 Q55.4 763 54 763 Q52.6 763 52.6 761.6 V757" fill="none" stroke="#5b93cc" stroke-width="1.1"/><text x="49" y="743.4" font-family="Liberation Sans, sans-serif" font-weight="bold" font-size="39" fill="#6a6a6a" textLength="25.4" lengthAdjust="spacingAndGlyphs">A</text><text x="977" y="99.6" font-family="Liberation Sans, sans-serif" font-weight="bold" font-size="7.4" fill="#fff" textLength="14.2" lengthAdjust="spacingAndGlyphs">PDF</text><path d="M1128.8 182.2 V211.7 M1157.6 182.2 V211.7" stroke="#2a2a2a" stroke-width="1.4" fill="none"/><path d="M1134 191.3 H1152.4" stroke="#4a86c0" stroke-width="1.7"/><path d="M1129.8 191.3 L1136.6 187.4 V195.2Z M1156.6 191.3 L1149.8 187.4 V195.2Z" fill="#4a86c0"/><path d="M1128.3 231.6 L1139.3 220.6 M1146.3 249.6 L1157.6 238.9" stroke="#2a2a2a" stroke-width="1.4" fill="none"/><path d="M1137.4 229.6 L1149 240.6" stroke="#4a86c0" stroke-width="1.7"/><path d="M1134.4 226.7 L1141.8 228.4 L1136.4 234Z M1152 243.5 L1144.6 241.8 L1150 236.2Z" fill="#4a86c0"/><circle cx="1143.2" cy="273.1" r="14.4" stroke="#2a2a2a" stroke-width="1.4" fill="none"/><path d="M1143.6 273.4 L1137 267.8" stroke="#4a86c0" stroke-width="1.7"/><path d="M1133.4 264.8 L1141 266 L1136.6 271.2Z" fill="#4a86c0"/><circle cx="1143.2" cy="310.8" r="14.4" stroke="#2a2a2a" stroke-width="1.4" fill="none"/><path d="M1136.6 304.8 L1149.6 317" stroke="#4a86c0" stroke-width="1.7"/><path d="M1133.3 301.7 L1141 303.2 L1135.6 309Z M1152.8 320 L1145.2 318.4 L1150.6 312.6Z" fill="#4a86c0"/><path d="M1128.3 357.4 L1147.9 337.5 M1128.3 361.4 H1157.6" stroke="#2a2a2a" stroke-width="1.4" fill="none"/><path d="M1147 345 Q1151.4 350 1151.6 356" fill="none" stroke="#4a86c0" stroke-width="1.6"/><path d="M1145.2 341.6 L1150.8 345 L1145.4 348.6Z M1151.8 360.4 L1148.2 354.6 L1155 354.4Z" fill="#4a86c0"/><path d="M1128.8 404.8 L1134.6 382.4 M1151.8 404.8 L1157.6 382.4" stroke="#2a2a2a" stroke-width="1.4" fill="none"/><path d="M1138 389.9 H1150.4" stroke="#4a86c0" stroke-width="1.7"/><path d="M1133.6 389.9 L1140.2 386.2 V393.6Z M1154.6 389.9 L1148 386.2 V393.6Z" fill="#4a86c0"/><rect x="1128.3" y="422.2" width="13.0" height="13.0" fill="#646464"/><rect x="1144.4" y="438.8" width="13.2" height="12.9" fill="#646464"/><rect x="1134.6" y="428.2" width="17.2" height="16.9" fill="#4a86c0" stroke="#e6eef7" stroke-width="1"/><rect x="1134.6" y="466.6" width="17.2" height="16.4" fill="#4a86c0"/><rect x="1128.3" y="460.3" width="13.0" height="13.0" fill="#646464" stroke="#eeeeee" stroke-width="1"/><rect x="1144.4" y="476.7" width="13.2" height="12.9" fill="#646464" stroke="#eeeeee" stroke-width="1"/><rect x="1138.2" y="508.1" width="19.4" height="19.5" fill="#646464"/><rect x="1128.3" y="498.4" width="19.9" height="19.4" fill="#4a86c0" stroke="#eef3f9" stroke-width="1"/><rect x="1128.3" y="536.1" width="19.9" height="19.6" fill="#4a86c0"/><rect x="1138.2" y="545.8" width="19.4" height="19.6" fill="#646464" stroke="#efefef" stroke-width="1"/><path d="M1172.4 211.2 H1202" stroke="#6d8fb5" stroke-width="1.3"/><g transform="translate(1187 196) rotate(-39)"><rect x="-15.4" y="-6" width="9.2" height="12" fill="#f0441a"/><rect x="-6.2" y="-6" width="3.4" height="12" fill="#fff6e8"/><rect x="-2.8" y="-6" width="18" height="12" rx="1.6" fill="#fbc712"/></g><circle cx="1178.1" cy="227.3" r="6.1" fill="#666"/><path d="M1185.4 225.3 H1194.9 V231.4" fill="none" stroke="#666" stroke-width="1.6"/><path d="M1194.9 235.2 L1191.6 230.4 H1198.2Z" fill="#666"/><circle cx="1195.6" cy="242.8" r="6.6" fill="#4a86c0"/><circle cx="1187" cy="242.8" r="7.6" fill="#f0f0f0"/><circle cx="1186.7" cy="242.8" r="6.6" fill="#4a86c0"/><path d="M1186.7 258.6 L1192.6 265.6 H1188.7 V271.1 H1194.2 V267.2 L1201.2 273.1 L1194.2 279 V275.1 H1188.7 V280.6 H1192.6 L1186.7 287.6 L1180.8 280.6 H1184.7 V275.1 H1179.2 V279 L1172.2 273.1 L1179.2 267.2 V271.1 H1184.7 V265.6 H1180.8Z" fill="#6a6a6a"/><path d="M1190.4 298.9 A13.3 13.3 0 1 0 1197.2 320" stroke="#2a2a2a" stroke-width="1.4" fill="none"/><path d="M1188.4 307.6 L1199.4 296.4 Q1200.2 295.8 1200.2 297 V308.2Z" fill="#666"/><path d="M1172.6 344.5 V334.8 H1201.5 V362.8 H1191.4" stroke="#2a2a2a" stroke-width="1.4" fill="none"/><rect x="1172.2" y="348.4" width="14.8" height="14.9" fill="#666"/><path d="M1201.9 380.5 H1192.5 V375 H1180 V381.3 H1178 Q1172.9 381.6 1172.9 386.8 V394 Q1172.9 399.3 1178 399.3 H1201.9" stroke="#2a2a2a" stroke-width="1.4" fill="none"/><path d="M1201.9 384.6 H1188.6 V379 H1184 V385.4 H1180.6 Q1177 385.6 1177 388.8 V392 Q1177 395.2 1180.6 395.2 H1201.9" fill="none" stroke="#b4c3d6" stroke-width="1.2"/><rect x="1172.9" y="410.9" width="12" height="12" fill="#f6f3f1" stroke-width="1.4" stroke="#2a2a2a"/><rect x="1189" y="410.9" width="12.3" height="12" fill="#f6f3f1" stroke-width="1.4" stroke="#2a2a2a"/><rect x="1172.9" y="427" width="12" height="12" fill="#f6f3f1" stroke-width="1.4" stroke="#92a9c6"/><rect x="1189" y="427" width="12.3" height="12" fill="#f6f3f1" stroke-width="1.4" stroke="#2a2a2a"/><path d="M1184.7 450.6 V476.6 H1173.4Z" stroke="#2a2a2a" stroke-width="1.4" fill="none"/><path d="M1188.6 449.3 V477.2 H1201.1Z" fill="#4a86c0"/><path d="M1172.9 507.3 Q1173.6 500 1176.2 496.6" fill="none" stroke="#2a2a2a" stroke-width="1.5" stroke-dasharray="2.4 1.6"/><path d="M1176.2 496.6 Q1180.4 491.6 1185 498 Q1190.6 507.4 1195.6 505.4 Q1199.6 503.8 1201.5 498.7" stroke="#2a2a2a" stroke-width="1.4" fill="none"/><rect x="1173" y="525" width="28" height="28" fill="#f5f5f5"/><path d="M1172.5 546.6 V553.4 H1201.6 V524.4" stroke="#2a2a2a" stroke-width="1.4" fill="none"/><path d="M1172.5 546 V524.4 H1201.6" fill="none" stroke="#2a2a2a" stroke-width="1.2" stroke-dasharray="2 1.8"/><path d="M1172.5 546.6 L1201.6 524.4" stroke="#7390b0" stroke-width="1.4"/><rect x="1173" y="563" width="28" height="28" fill="#f5f5f5"/><path d="M1172.5 579.5 V591.3 H1201.6 V562.3 H1190.2" stroke="#2a2a2a" stroke-width="1.4" fill="none"/><path d="M1172.5 579 V562.3 H1190" fill="none" stroke="#2a2a2a" stroke-width="1.2" stroke-dasharray="2 1.8"/><path d="M1172.5 579.5 Q1173.4 563.6 1190.2 562.3" fill="none" stroke="#6f89a8" stroke-width="1.4"/><path d="M1178.9 626.5 L1185.2 602.2" stroke="#2a2a2a" stroke-width="1.7"/><path d="M1172.2 614.3 H1177.8" stroke="#2a2a2a" stroke-width="1.7"/><path d="M1185.6 614.3 H1201.6" stroke="#a9bdd4" stroke-width="1.7" stroke-dasharray="6 3.6"/><path d="M1172.6 649.8 H1186" stroke="#555" stroke-width="1.6"/><path d="M1189 649.8 L1183.4 646.4 V653.2Z" fill="#555"/><path d="M1172.3 657.9 H1177.8" stroke="#2a2a2a" stroke-width="1.7"/><path d="M1181.3 657.9 H1194" stroke="#a9bdd4" stroke-width="1.7" stroke-dasharray="4.6 2.4"/><path d="M1201.9 640.9 L1195.6 664.2" stroke="#2a2a2a" stroke-width="1.7"/><rect x="1172.3" y="689.3" width="16.5" height="16.1" fill="#666"/><path d="M1172.3 685.7 L1184 677.3 H1200.1 L1188.8 685.7Z" fill="#666"/><path d="M1192 688.4 L1202.2 680.8 V697.3 L1192 705.4Z" fill="#4a86c0"/><path d="M1180.4 720 H1173.6 Q1172.4 720 1172.4 721.2 V739 Q1172.4 740.2 1173.6 740.2 H1200.6 Q1201.8 740.2 1201.8 739 V721.2 Q1201.8 720 1200.6 720 H1193.6" stroke="#2a2a2a" stroke-width="1.4" fill="none"/><rect x="1178.1" y="717.1" width="4.6" height="4.6" fill="#4a80b8"/><rect x="1191.2" y="717.1" width="4.6" height="4.6" fill="#4a80b8"/><path d="M1172.3 767.2 H1182 M1192.4 767.2 H1201.9" stroke="#2a2a2a" stroke-width="1.6"/><path d="M1186 767.2 L1180.6 761.8 L1182.4 767.2 L1180.6 772.6Z M1188.6 767.2 L1194 761.8 L1192.2 767.2 L1194 772.6Z" fill="#4a86c0"/></svg>
<svg width="1211" height="894" viewBox="0 0 1211 894" shape-rendering="crispEdges"><path d="M288.9 360.0 L417.3 453.3 L368.3 604.2 L209.5 604.2 L160.5 453.3Z" stroke="#fff" stroke-width="1.75" fill="none"/><path d="M288.9 360.0 A101.3 101.3 0 0 0 417.3 453.3" stroke="#fff" stroke-width="1.75" fill="none"/><path d="M417.3 453.3 A101.3 101.3 0 0 0 368.3 604.2" stroke="#fff" stroke-width="1.75" fill="none"/><path d="M368.3 604.2 A101.3 101.3 0 0 0 209.5 604.2" stroke="#fff" stroke-width="1.75" fill="none"/><path d="M209.5 604.2 A101.3 101.3 0 0 0 160.5 453.3" stroke="#fff" stroke-width="1.75" fill="none"/><path d="M160.5 453.3 A101.3 101.3 0 0 0 288.9 360.0" stroke="#fff" stroke-width="1.75" fill="none"/><path d="M330.6 437.6 A89.0 89.0 0 0 0 356.3 516.9" stroke="#fff" stroke-width="1.75" fill="none"/><path d="M356.3 516.9 A89.0 89.0 0 0 0 288.9 565.9" stroke="#fff" stroke-width="1.75" fill="none"/><path d="M288.9 565.9 A89.0 89.0 0 0 0 221.5 516.9" stroke="#fff" stroke-width="1.75" fill="none"/><path d="M221.5 516.9 A89.0 89.0 0 0 0 247.2 437.6" stroke="#fff" stroke-width="1.75" fill="none"/><path d="M247.2 437.6 A89.0 89.0 0 0 0 330.6 437.6" stroke="#fff" stroke-width="1.75" fill="none"/><path d="M288.9 448.0 L333.6 480.5 L316.5 533.0 L261.3 533.0 L244.2 480.5Z" stroke="#fff" stroke-width="1.75" fill="none"/><path d="M250 502 H328 M261 496 V511.5 M317 496 V511.5" stroke="#ffff00" stroke-width="2" fill="none"/><path d="M477.8 473.1 L429.5 622.4 M469.1 469.5 L483.9 475.2 M420.4 619.6 L434.6 625.6" stroke="#ffff00" stroke-width="2" fill="none"/><rect x="102.5" y="765.5" width="8" height="8" stroke="#fff" stroke-width="1.1" fill="none"/><path d="M106.5 765.5 V719.5 M102.5 730.5 H110.5 L106.5 719.5 Z M105 730.5 L106.5 722 L108 730.5" stroke="#fff" stroke-width="1.1" fill="none"/><path d="M110.5 769.5 H156.5 M145.5 765.5 V773.5 L156.5 769.5 Z M145.5 768 L154 769.5 L145.5 771" stroke="#fff" stroke-width="1.1" fill="none"/><path d="M102.3 701.5 L106.8 706 L111.4 701.5 M106.8 706 V711" stroke="#fff" stroke-width="1.1" fill="none"/><path d="M166.2 764.5 L175 774 M175 764.5 L166.2 774" stroke="#fff" stroke-width="1.1" fill="none"/><path d="M1115.5 546 V792 M870 791.5 H1121" stroke="#fff" stroke-width="1" fill="none"/><rect x="871.5" y="755.5" width="220" height="8" fill="none" stroke="#808080" stroke-width="1"/><rect x="902" y="755" width="63" height="4.5" fill="#808080"/><rect x="871" y="759.5" width="31" height="4.5" fill="#808080"/><rect x="965" y="759.5" width="127" height="4.5" fill="#808080"/></svg>
<svg width="1211" height="894" viewBox="0 0 1211 894"><text x="271 285.4 293.6 307.9" y="497.8" text-anchor="middle" font-family="Liberation Serif, serif" font-size="26" fill="#e8e828">17,5</text><text transform="translate(480.4 556.6) rotate(-72)" text-anchor="middle" font-family="Liberation Serif, serif" font-size="26" fill="#dcdc2c" x="-7.2 7.2" y="0">50</text><text x="902" y="752" text-anchor="middle" font-family="Liberation Sans, sans-serif" font-size="11" fill="#8a8a8a">10</text><text x="1091" y="752" text-anchor="middle" font-family="Liberation Sans, sans-serif" font-size="11" fill="#8a8a8a">70</text><text x="871" y="774.5" text-anchor="middle" font-family="Liberation Sans, sans-serif" font-size="11" fill="#8a8a8a">0</text><text x="965" y="774.5" text-anchor="middle" font-family="Liberation Sans, sans-serif" font-size="11" fill="#8a8a8a">30</text></svg>
</body></html>
